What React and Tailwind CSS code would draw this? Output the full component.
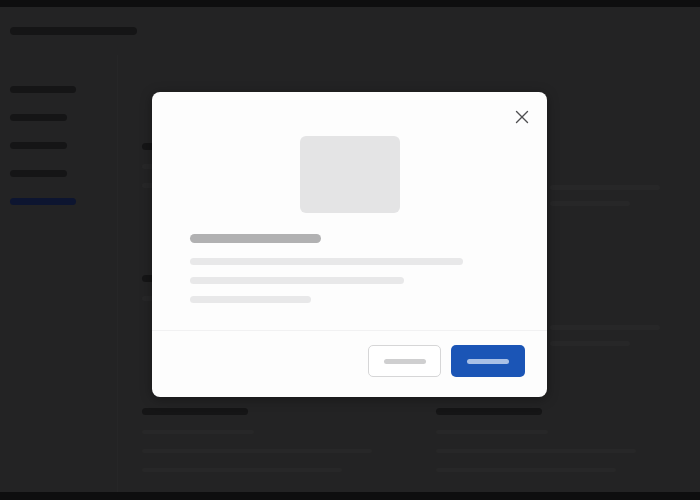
import { X } from "lucide-react";

function Bar({ className }) {
  return <div className={`rounded-full ${className}`}></div>;
}

function BackgroundPage() {
  return (
    <div className="flex flex-col h-[500px] w-[700px] bg-[#232324] overflow-hidden">
      <div className="h-[7px] bg-[#0e0e0f] shrink-0"></div>
      <div className="h-[48px] shrink-0 flex items-center px-[10px]">
        <Bar className="w-[127px] h-[8px] bg-[#151516]" />
      </div>
      <div className="flex flex-1 min-h-0">
        <aside className="w-[118px] shrink-0 border-r border-[#262627] flex flex-col gap-[21px] px-[10px] pt-[31px]">
          <Bar className="w-[66px] h-[7px] bg-[#151516]" />
          <Bar className="w-[57px] h-[7px] bg-[#151516]" />
          <Bar className="w-[57px] h-[7px] bg-[#151516]" />
          <Bar className="w-[57px] h-[7px] bg-[#151516]" />
          <Bar className="w-[66px] h-[7px] bg-[#0d1530]" />
        </aside>
        <main className="flex-1 flex flex-col pl-[24px] pr-[20px] pt-[88px]">
          <div className="flex gap-[20px] h-[132px]">
            <div className="flex-1 flex flex-col gap-[14px]">
              <Bar className="w-[110px] h-[7px] bg-[#151516]" />
              <Bar className="w-[300px] h-[5px] bg-[#272728]" />
              <Bar className="w-[250px] h-[5px] bg-[#272728]" />
            </div>
            <div className="w-[130px] flex flex-col gap-[11px] pt-[42px]">
              <Bar className="w-[110px] h-[5px] bg-[#272728]" />
              <Bar className="w-[80px] h-[5px] bg-[#272728]" />
            </div>
          </div>
          <div className="flex gap-[20px] h-[133px]">
            <div className="flex-1 flex flex-col gap-[14px]">
              <Bar className="w-[110px] h-[7px] bg-[#151516]" />
              <Bar className="w-[300px] h-[5px] bg-[#272728]" />
            </div>
            <div className="w-[130px] flex flex-col gap-[11px] pt-[50px]">
              <Bar className="w-[110px] h-[5px] bg-[#272728]" />
              <Bar className="w-[80px] h-[5px] bg-[#272728]" />
            </div>
          </div>
          <div className="grid grid-cols-[270px_1fr] gap-[24px]">
            <div className="flex flex-col gap-[15px]">
              <Bar className="w-[106px] h-[7px] bg-[#151516]" />
              <Bar className="w-[112px] h-[4px] bg-[#272728]" />
              <Bar className="w-[230px] h-[4px] bg-[#272728]" />
              <Bar className="w-[200px] h-[4px] bg-[#272728]" />
            </div>
            <div className="flex flex-col gap-[15px]">
              <Bar className="w-[106px] h-[7px] bg-[#151516]" />
              <Bar className="w-[112px] h-[4px] bg-[#272728]" />
              <Bar className="w-[200px] h-[4px] bg-[#272728]" />
              <Bar className="w-[180px] h-[4px] bg-[#272728]" />
            </div>
          </div>
        </main>
      </div>
      <div className="h-[8px] bg-[#0e0e0f] shrink-0"></div>
    </div>
  );
}

function Modal() {
  return (
    <div className="absolute left-[152px] top-[92px] w-[395px] h-[305px] bg-[#fdfdfd] rounded-[8px] shadow-[0_2px_12px_rgba(0,0,0,0.35)] flex flex-col">
      <button className="absolute right-[14px] top-[14px] w-[22px] h-[22px] flex items-center justify-center text-[#4f4f51]">
        <X size={22} strokeWidth={1.5} />
      </button>
      <div className="flex-1 flex flex-col px-[38px] pt-[44px]">
        <div className="self-center w-[100px] h-[77px] rounded-[6px] bg-[#e4e4e5]"></div>
        <Bar className="mt-[21px] w-[131px] h-[9px] bg-[#b1b1b2]" />
        <Bar className="mt-[15px] w-[273px] h-[7px] bg-[#e8e8e9]" />
        <Bar className="mt-[12px] w-[214px] h-[7px] bg-[#e8e8e9]" />
        <Bar className="mt-[12px] w-[121px] h-[7px] bg-[#e8e8e9]" />
      </div>
      <div className="h-[67px] border-t border-[#f1f1f2] flex justify-end items-start gap-[10px] pt-[14px] pr-[22px]">
        <button className="w-[73px] h-[32px] rounded-[5px] border border-[#d6d6d7] bg-white flex items-center justify-center">
          <Bar className="w-[42px] h-[5px] bg-[#cfcfd0]" />
        </button>
        <button className="w-[74px] h-[32px] rounded-[5px] bg-[#1b55b6] flex items-center justify-center">
          <Bar className="w-[42px] h-[5px] bg-[#a9c0e6]" />
        </button>
      </div>
    </div>
  );
}

export default function App() {
  return (
    <div className="relative w-[700px] h-[500px] overflow-hidden" style={{ fontFamily: "Inter, 'Liberation Sans', sans-serif" }}>
      <BackgroundPage />
      <Modal />
    </div>
  );
}
